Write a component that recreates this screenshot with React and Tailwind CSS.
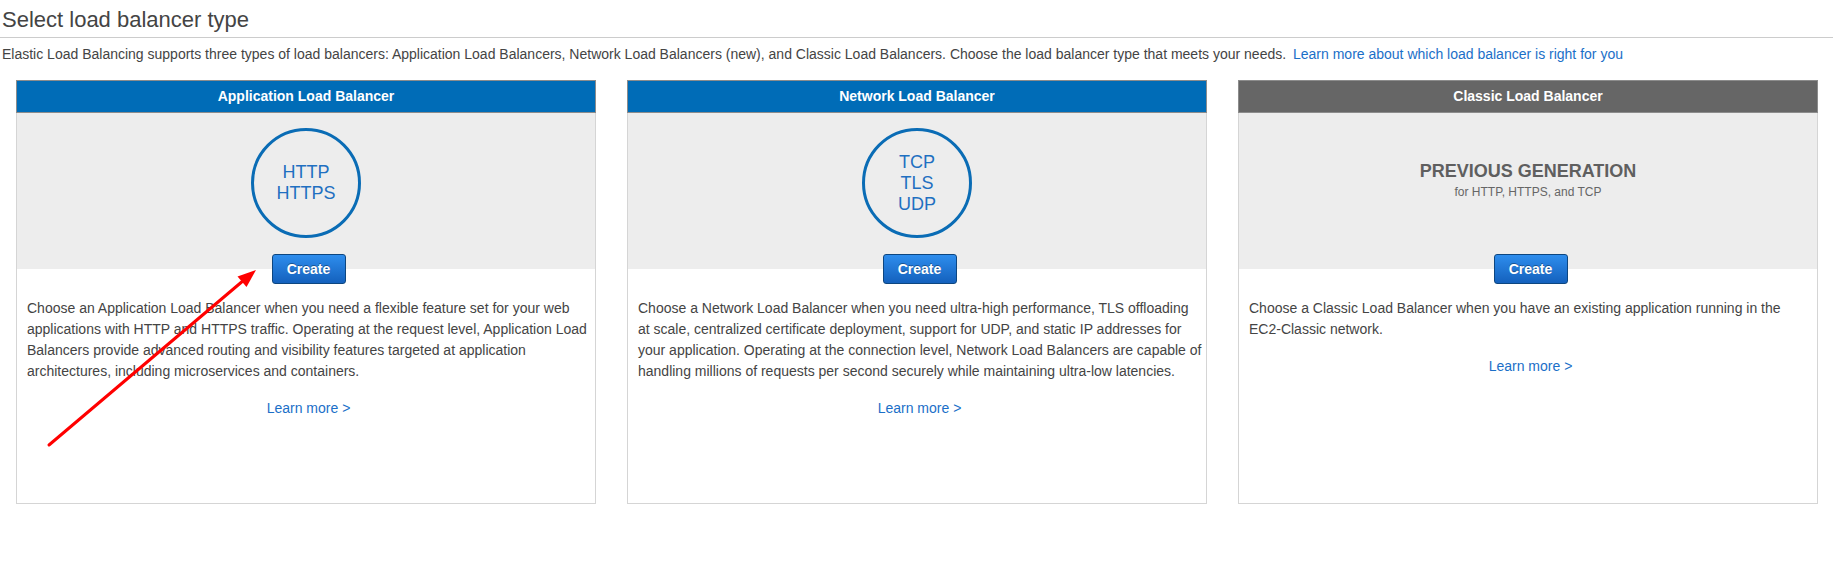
import React from 'react';

const cards = [
  {
    title: 'Application Load Balancer',
    headerBg: 'bg-[#006cb7]',
    protocols: ['HTTP', 'HTTPS'],
    text: 'Choose an Application Load Balancer when you need a flexible feature set for your web applications with HTTP and HTTPS traffic. Operating at the request level, Application Load Balancers provide advanced routing and visibility features targeted at application architectures, including microservices and containers.',
  },
  {
    title: 'Network Load Balancer',
    headerBg: 'bg-[#006cb7]',
    protocols: ['TCP', 'TLS', 'UDP'],
    text: 'Choose a Network Load Balancer when you need ultra-high performance, TLS offloading at scale, centralized certificate deployment, support for UDP, and static IP addresses for your application. Operating at the connection level, Network Load Balancers are capable of handling millions of requests per second securely while maintaining ultra-low latencies.',
  },
  {
    title: 'Classic Load Balancer',
    headerBg: 'bg-[#666666]',
    previous: true,
    text: 'Choose a Classic Load Balancer when you have an existing application running in the EC2-Classic network.',
  },
];

const Card = ({ card }) => (
  <div className="h-[424px] border border-[#d5d5d5] bg-white">
    <div
      className={`-mx-px -mt-px h-[33px] border border-[#8c8c8c] ${card.headerBg} flex items-center justify-center text-[14px] font-bold text-white`}
    >
      {card.title}
    </div>
    <div className="h-[156px] bg-[#ededed] flex justify-center">
      {card.previous ? (
        <div className="pt-[47px] text-center">
          <div className="text-[18px] leading-[22px] font-bold text-[#5f5f5f]">PREVIOUS GENERATION</div>
          <div className="mt-[2px] text-[12px] leading-[16px] text-[#666]">for HTTP, HTTPS, and TCP</div>
        </div>
      ) : (
        <div className="mt-[15px] w-[110px] h-[110px] rounded-full border-[3px] border-[#0a6cb5] flex flex-col items-center justify-center text-[18px] leading-[21px] text-[#1f70c1]">
          {card.protocols.map((p) => (
            <span key={p}>{p}</span>
          ))}
        </div>
      )}
    </div>
    <div className="-mt-[15px] pl-[5px] flex justify-center">
      <button
        type="button"
        className="h-[30px] w-[74px] rounded-[3px] border border-[#0d4680] bg-gradient-to-b from-[#2e8ded] to-[#1461bd] text-[14px] font-bold text-white [text-shadow:0_-1px_0_rgba(0,0,0,0.35)]"
      >
        Create
      </button>
    </div>
    <p className="mt-[14px] pl-[10px] pr-[4px] text-[14px] leading-[21px] text-[#444]">{card.text}</p>
    <div className="mt-[16px] pl-[5px] text-center text-[14px] leading-[21px]">
      <a href="#" className="text-[#1b6fc8]">
        Learn more &gt;
      </a>
    </div>
  </div>
);

const App = () => {
  return (
    <div className="relative w-[1837px] h-[567px] bg-white font-['Liberation_Sans',Arial,sans-serif]">
      <div className="mr-[4px] h-[38px] border-b border-[#cccccc] pt-[6px] pl-[2px] text-[22px] leading-[28px] text-[#444]">
        Select load balancer type
      </div>
      <div className="mt-[6px] pl-[2px] text-[14px] leading-[20px] text-[#444]">
        Elastic Load Balancing supports three types of load balancers: Application Load Balancers, Network Load Balancers (new), and Classic Load Balancers. Choose the load balancer type that meets your needs.{' '}
        <a href="#" className="ml-[3px] text-[#1b6fc8]">
          Learn more about which load balancer is right for you
        </a>
      </div>
      <div className="mt-[16px] pl-[16px] grid grid-cols-[repeat(3,580px)] gap-x-[31px]">
        {cards.map((c) => (
          <Card key={c.title} card={c} />
        ))}
      </div>

      {/* red annotation arrow */}
      <svg className="absolute left-0 top-0 pointer-events-none" width="1837" height="567">
        <line x1="49" y1="445" x2="244" y2="280" stroke="#ff0000" strokeWidth="3" strokeLinecap="round" />
        <polygon points="256,270 246.5,287 237.5,276.5" fill="#ff0000" />
      </svg>
    </div>
  );
};

export default App;
